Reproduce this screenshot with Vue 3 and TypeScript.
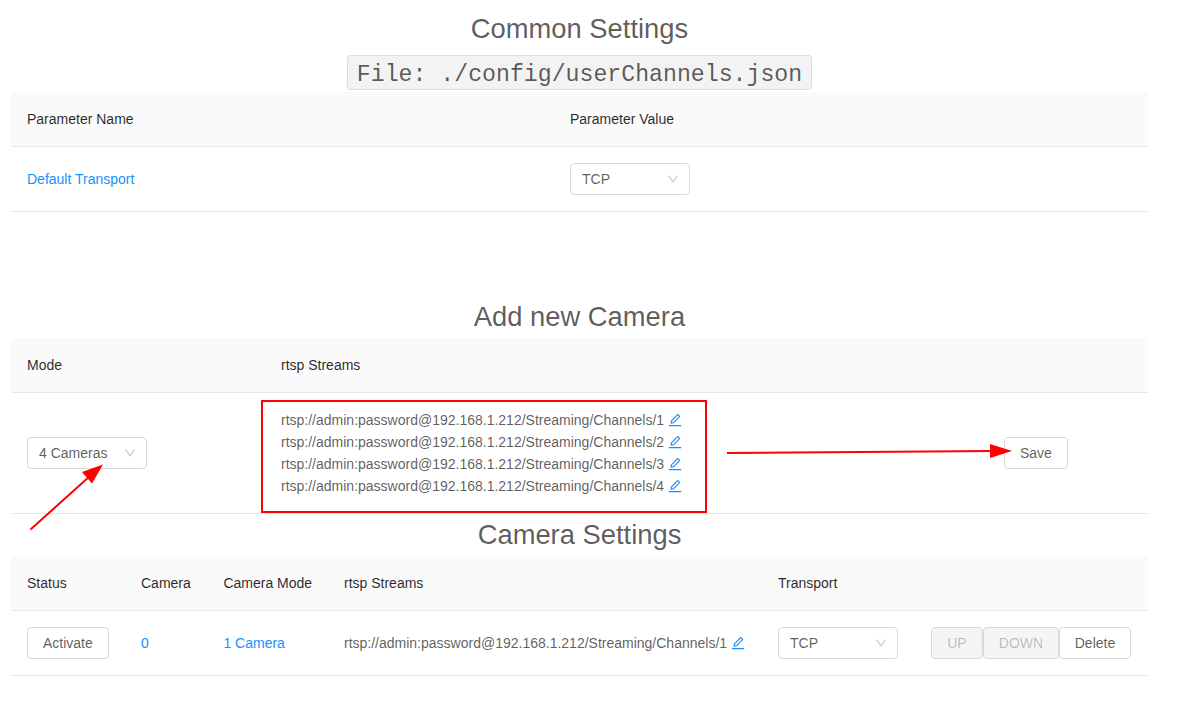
<script setup lang="ts">
const editPath = 'M257.7 752c2 0 4-.2 6-.5L431.9 722c2-.4 3.9-1.3 5.3-2.8l423.9-423.9a9.96 9.96 0 0 0 0-14.1L694.9 114.9c-1.9-1.9-4.4-2.9-7.1-2.9s-5.2 1-7.1 2.9L256.8 538.8c-1.5 1.5-2.4 3.3-2.8 5.3l-29.5 168.2a33.5 33.5 0 0 0 9.4 29.8c6.6 6.4 14.9 9.9 23.8 9.9zm67.4-174.4L687.8 215l73.3 73.3-362.7 362.6-88.9 15.7 15.6-89zM880 836H144c-17.7 0-32 14.3-32 32v36c0 4.4 3.6 8 8 8h784c4.4 0 8-3.6 8-8v-36c0-17.7-14.3-32-32-32z'
const downPath = 'M884 256h-75c-5.1 0-9.9 2.5-12.9 6.6L512 654.2 227.9 262.6c-3-4.1-7.8-6.6-12.9-6.6h-75c-6.5 0-10.3 7.4-6.5 12.7l352.6 486.1c12.8 17.6 39 17.6 51.7 0l352.6-486.1c3.9-5.3.1-12.7-6.4-12.7z'
const base = 'rtsp://admin:password@192.168.1.212/Streaming/Channels/'
const streams: string[] = [1, 2, 3, 4].map((n) => base + n)
</script>

<template>
  <div class="page">
    <h2 class="title first">Common Settings</h2>
    <div class="file-line"><code class="file">File: ./config/userChannels.json</code></div>
    <table class="tbl">
      <colgroup><col class="c543" /><col /></colgroup>
      <thead>
        <tr><th>Parameter Name</th><th>Parameter Value</th></tr>
      </thead>
      <tbody>
        <tr>
          <td><a class="link">Default Transport</a></td>
          <td>
            <div class="select">
              <span>TCP</span>
              <svg class="arrow" viewBox="64 64 896 896" fill="currentColor"><path :d="downPath" /></svg>
            </div>
          </td>
        </tr>
      </tbody>
    </table>

    <h2 class="title second">Add new Camera</h2>
    <table class="tbl">
      <colgroup><col class="c254" /><col class="c723" /><col /></colgroup>
      <thead>
        <tr><th>Mode</th><th>rtsp Streams</th><th></th></tr>
      </thead>
      <tbody>
        <tr>
          <td>
            <div class="select">
              <span>4 Cameras</span>
              <svg class="arrow" viewBox="64 64 896 896" fill="currentColor"><path :d="downPath" /></svg>
            </div>
          </td>
          <td>
            <div v-for="s in streams" :key="s" class="stream">
              {{ s }}<svg class="edit" viewBox="64 64 896 896" fill="currentColor"><path :d="editPath" /></svg>
            </div>
          </td>
          <td><button class="btn">Save</button></td>
        </tr>
      </tbody>
    </table>

    <h2 class="title third">Camera Settings</h2>
    <table class="tbl">
      <colgroup>
        <col class="c114" /><col class="c82" /><col class="c121" /><col class="c434" /><col class="c153" /><col />
      </colgroup>
      <thead>
        <tr>
          <th>Status</th><th>Camera</th><th>Camera Mode</th><th>rtsp Streams</th><th>Transport</th><th></th>
        </tr>
      </thead>
      <tbody>
        <tr>
          <td><button class="btn">Activate</button></td>
          <td><a class="link">0</a></td>
          <td><a class="link">1 Camera</a></td>
          <td>
            <div class="stream">
              {{ streams[0] }}<svg class="edit" viewBox="64 64 896 896" fill="currentColor"><path :d="editPath" /></svg>
            </div>
          </td>
          <td>
            <div class="select">
              <span>TCP</span>
              <svg class="arrow" viewBox="64 64 896 896" fill="currentColor"><path :d="downPath" /></svg>
            </div>
          </td>
          <td>
            <div class="actions">
              <button class="btn up" disabled>UP</button>
              <button class="btn down" disabled>DOWN</button>
              <button class="btn del">Delete</button>
            </div>
          </td>
        </tr>
      </tbody>
    </table>

    <svg class="notes" width="1192" height="721" viewBox="0 0 1192 721">
      <rect x="262" y="401" width="444" height="111" fill="none" stroke="#ff0000" stroke-width="2" />
      <line x1="30.5" y1="529.5" x2="90" y2="476" stroke="#ff0000" stroke-width="2" />
      <polygon points="103,464.5 82,472 92,483.5" fill="#ff0000" />
      <line x1="727" y1="453" x2="992" y2="451" stroke="#ff0000" stroke-width="2" />
      <polygon points="1012,451 990,444 990,458" fill="#ff0000" />
    </svg>
  </div>
</template>

<style scoped>
.page {
  position: relative;
  width: 1192px;
  height: 721px;
  box-sizing: border-box;
  padding: 0 44px 0 11px;
  overflow: hidden;
  font-family: "Liberation Sans", Arial, sans-serif;
  font-size: 14px;
  color: rgba(0, 0, 0, 0.65);
  background: #fff;
}
.title {
  margin: 0;
  font-size: 27.35px;
  font-weight: 400;
  text-align: center;
  line-height: 42px;
  height: 42px;
}
.first { padding-top: 8px; margin-bottom: 5px; }
.second { margin-top: 83px; height: 43px; line-height: 43px; }
.third { margin-top: 0; }
.file-line {
  height: 37px;
  text-align: center;
  line-height: 35px;
}
.file {
  display: inline-block;
  box-sizing: border-box;
  height: 35px;
  width: 465px;
  padding: 0;
  font-family: "Liberation Mono", monospace;
  font-size: 23.2px;
  line-height: 38px;
  background: #f3f3f3;
  border: 1px solid #dedede;
  border-radius: 3px;
  vertical-align: top;
}
.tbl {
  width: 1137px;
  table-layout: fixed;
  border-collapse: separate;
  border-spacing: 0;
}
.c543 { width: 543px; }
.c254 { width: 254px; }
.c723 { width: 723px; }
.c114 { width: 114px; }
.c82 { width: 82.4px; }
.c121 { width: 120.6px; }
.c434 { width: 434px; }
.c153 { width: 153px; }
th {
  height: 54px;
  box-sizing: content-box;
  padding: 0 16px;
  font-weight: 500;
  text-align: left;
  color: rgba(0, 0, 0, 0.85);
  background: #fafafa;
  border-bottom: 1px solid #e8e8e8;
}
td {
  padding: 16px;
  line-height: 22px;
  vertical-align: middle;
  border-bottom: 1px solid #e8e8e8;
}
th, td { overflow: visible; white-space: nowrap; }
.link { color: #1890ff; }
.select {
  display: flex;
  align-items: center;
  justify-content: space-between;
  box-sizing: border-box;
  width: 120px;
  height: 32px;
  padding: 0 10px 0 11px;
  border: 1px solid #d9d9d9;
  border-radius: 4px;
}
.arrow {
  width: 12px;
  height: 12px;
  color: rgba(0, 0, 0, 0.25);
}
.stream { height: 22px; line-height: 22px; }
.edit {
  width: 14px;
  height: 14px;
  margin-left: 4px;
  color: #1890ff;
  vertical-align: -2px;
}
.btn {
  box-sizing: border-box;
  height: 32px;
  padding: 0 15px;
  font-family: inherit;
  font-size: 14px;
  color: rgba(0, 0, 0, 0.65);
  background: #fff;
  border: 1px solid #d9d9d9;
  border-radius: 4px;
}
.btn:disabled {
  color: rgba(0, 0, 0, 0.25);
  background: #f5f5f5;
}
.actions { display: flex; }
.actions .btn { padding: 0; flex: none; }
.actions .up { width: 52px; }
.actions .down { width: 76px; }
.actions .del { width: 72px; }
.notes {
  position: absolute;
  left: 0;
  top: 0;
  pointer-events: none;
}
</style>
